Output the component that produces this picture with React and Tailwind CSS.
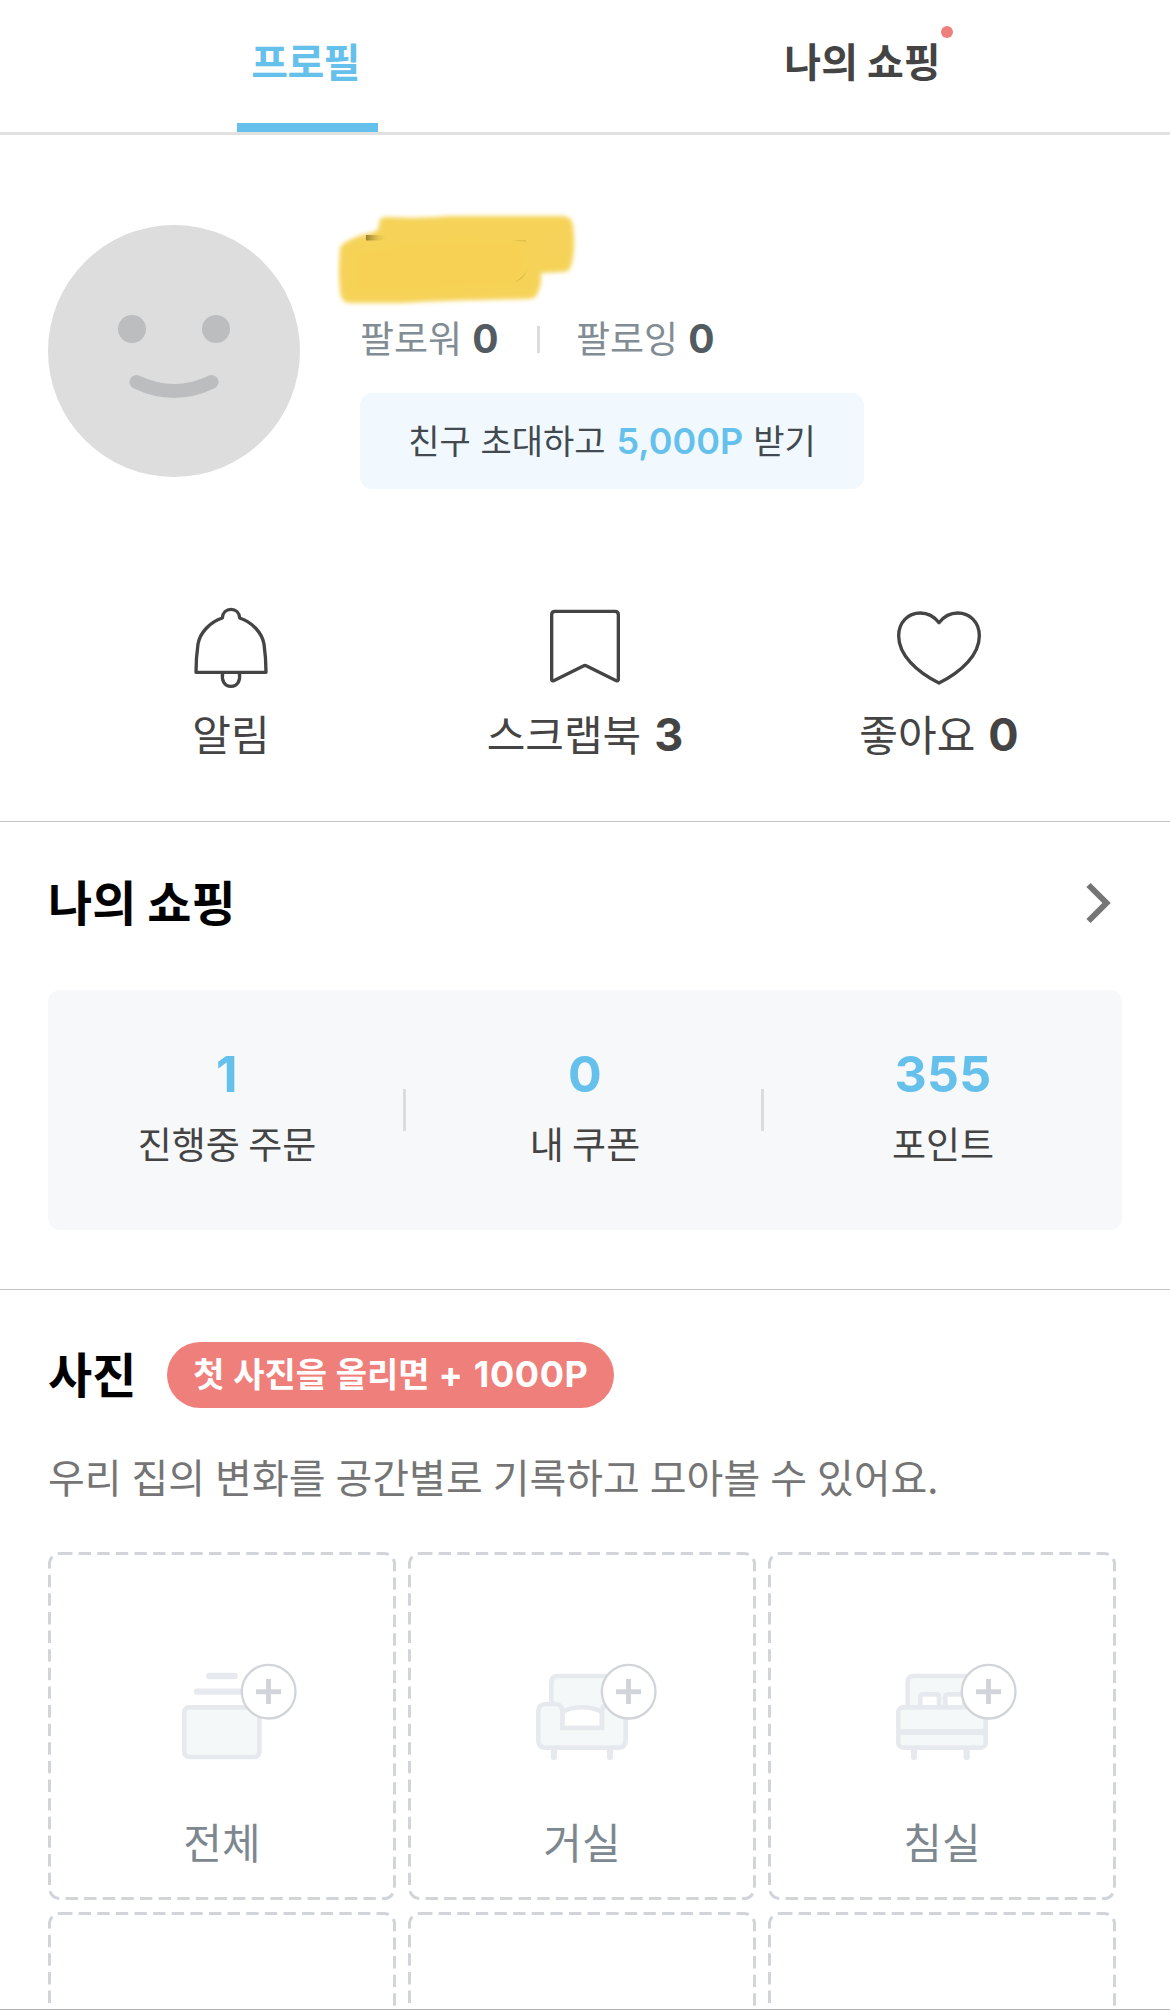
import React from "react";

const Num = ({ className, children }) => (
  <span className={`font-['Inter',sans-serif] leading-none ${className}`}>{children}</span>
);

function BellIcon() {
  return (
    <svg className="h-[90px] w-[90px]" viewBox="78 45 270 270" fill="none" stroke="#444444" strokeWidth="10" strokeLinejoin="round">
      <path d="M187 84C188 68 199 58 213 58C227 58 238 68 239 84C276 96 306 128 312 162C316 190 318 218 318 247H108C108 218 110 190 114 162C120 128 150 96 187 84Z" />
      <path d="M188 248C184 270 192 289 213 289C234 289 242 270 238 248" />
    </svg>
  );
}

function BookmarkIcon() {
  return (
    <svg className="h-[90px] w-[90px]" viewBox="1140 45 270 270" fill="none" stroke="#444444" strokeWidth="10" strokeLinejoin="round">
      <path d="M1185 64H1365Q1375 64 1375 74V268Q1375 274 1369 272L1280 228Q1275 225 1270 228L1181 272Q1175 274 1175 268V74Q1175 64 1185 64Z" />
    </svg>
  );
}

function HeartIcon() {
  return (
    <svg className="h-[90px] w-[90px]" viewBox="882 45 270 270" fill="none" stroke="#444444" strokeWidth="10" strokeLinejoin="round">
      <path d="M1017 98C1002 79 982 69 961 69C924 69 896 97 896 137C896 194 948 244 1017 279C1086 244 1138 194 1138 137C1138 97 1110 69 1073 69C1052 69 1032 79 1017 98Z" />
    </svg>
  );
}

function PlusBadge() {
  return (
    <g>
      <circle cx="356" cy="155" r="80.5" fill="#ffffff" stroke="#d1d5da" strokeWidth="7" />
      <path d="M318 155H393M355.5 117V192" stroke="#d1d5da" strokeWidth="15" fill="none" />
    </g>
  );
}

const art = { fill: "#f4f8f9", stroke: "#e6eaef", strokeWidth: 14 };

function AllArt() {
  return (
    <g {...art}>
      <path d="M178 108H254M141 155H300" strokeWidth="19" strokeLinecap="round" fill="none" />
      <rect x="103" y="202" width="225" height="149" rx="14" />
    </g>
  );
}

function SofaArt() {
  return (
    <g {...art} strokeLinejoin="round">
      <path d="M132 320V351M300 320V351" strokeWidth="19" strokeLinecap="round" fill="none" />
      <path d="M124 210V129Q124 108 145 108H290Q311 108 311 129V210V264H157Z" />
      <path d="M157 264V216C190 197 240 197 276 216V264Z" fill="#ffffff" />
      <path d="M85 215Q85 192 108 192H134Q157 192 157 215V264H276V215Q276 192 299 192H325Q347 192 347 215V300Q347 323 324 323H108Q85 323 85 300Z" strokeLinejoin="miter" />
    </g>
  );
}

function BedArt() {
  return (
    <g {...art}>
      <path d="M132 322V351M290 322V351" strokeWidth="19" strokeLinecap="round" fill="none" />
      <path d="M113 202V126Q113 108 131 108H300Q319 108 319 126V202Z" />
      <path d="M151 202V172Q151 163 160 163H198Q207 163 207 172V202Z" fill="#ffffff" />
      <path d="M226 202V172Q226 163 235 163H273Q282 163 282 172V202Z" fill="#ffffff" />
      <rect x="85" y="202" width="262" height="121" rx="15" />
      <path d="M85 276H347" strokeWidth="18" />
    </g>
  );
}

function PhotoCard({ label, Art }) {
  return (
    <div className="relative flex h-[348px] w-[348px] flex-col items-center pt-[108px]">
      <svg className="absolute inset-0 h-[348px] w-[348px]" viewBox="0 0 348 348" fill="none">
        <rect x="1.5" y="1.5" width="345" height="345" rx="10.5" stroke="#d1d5da" strokeWidth="3" strokeDasharray="12.4 6.22" />
      </svg>
      {Art && (
        <svg className="h-[103px] w-[156px]" viewBox="-18 60 468 309">
          <Art />
          <PlusBadge />
        </svg>
      )}
      {label && (
        <div className="mt-[48px] h-[60px] text-[42px] leading-[60px] text-[#7d878f]">{label}</div>
      )}
    </div>
  );
}

function Shortcut({ icon, label, count }) {
  return (
    <div className="flex w-[354px] flex-col items-center">
      {icon}
      <div className="mt-[8px] h-[60px] whitespace-nowrap text-[42px] leading-[60px] text-[#444444]">
        {label}
        {count && <Num className="ml-[13px] text-[45px] font-bold">{count}</Num>}
      </div>
    </div>
  );
}

function Stat({ value, label, divider }) {
  return (
    <div className="relative flex w-[358px] flex-col items-center pt-[54px]">
      <Num className="h-[60px] text-[50px] font-bold !leading-[60px] tracking-[0.3px] text-[#65c1eb]">{value}</Num>
      <div className="mt-[13px] h-[52px] text-[37px] leading-[52px] text-[#444444]">{label}</div>
      {divider && <span className="absolute right-0 top-[99px] h-[42px] w-[3px] bg-[#dbdcde]" />}
    </div>
  );
}

export default function App() {
  return (
    <div className="flex h-[2010px] w-[1170px] flex-col overflow-hidden border-b border-[#b3b3b3] bg-white font-['Noto_Sans_CJK_KR',sans-serif]">
      <header className="flex h-[135px] shrink-0 justify-center border-b-[3px] border-[#e1e1e1] text-[40px] font-bold leading-[60px]">
        <div className="flex w-[555px] flex-col items-center justify-between pt-[30px]">
          <span className="-ml-[4px] tracking-[-0.6px] text-[#65c1eb]">프로필</span>
          <span className="h-[9px] w-[141px] bg-[#65c1eb]" />
        </div>
        <div className="flex w-[555px] justify-center pt-[30px]">
          <span className="relative h-[60px] text-[#444444]">
            나의 쇼핑
            <span className="absolute -right-[12px] -top-[4px] h-[12px] w-[12px] rounded-full bg-[#ef7f7b]" />
          </span>
        </div>
      </header>

      <section className="flex h-[470px] shrink-0 pl-[48px] pt-[90px]">
        <svg className="h-[252px] w-[252px]" viewBox="0 0 252 252">
          <circle cx="126" cy="126" r="126" fill="#dddddd" />
          <circle cx="84" cy="104" r="14" fill="#bbbdbf" />
          <circle cx="168" cy="104" r="14" fill="#bbbdbf" />
          <path d="M88.5 157Q126 175 163.5 157" fill="none" stroke="#bbbdbf" strokeWidth="14" strokeLinecap="round" />
        </svg>
        <div className="ml-[36px] -mt-[13px] flex flex-col">
          <svg className="h-[96px] w-[244px]" viewBox="336 212 244 96">
            <defs>
              <filter id="soft" x="-5%" y="-10%" width="110%" height="120%">
                <feGaussianBlur stdDeviation="1.9" />
              </filter>
              <linearGradient id="mark" x1="0" x2="1">
                <stop offset="0" stopColor="#6b5b1e" />
                <stop offset="1" stopColor="#f6d251" stopOpacity="0" />
              </linearGradient>
            </defs>
            <path
              d="M340 250Q339 246 346 242Q358 235 371 233Q379 231 379 226V222Q380 217 387 217Q420 219 450 216L562 216Q572 216 573 226Q576 250 571 266Q569 272 563 272L541 273Q542 287 536 296Q534 299 528 299Q450 300 400 303H350Q341 303 340 291Q338 270 340 250Z"
              fill="#f6d358"
              filter="url(#soft)"
            />
            <path d="M350 252Q420 232 520 240Q532 260 524 285Q440 296 352 292Z" fill="#f6d050" opacity="0.35" filter="url(#soft)" />
            <rect x="366" y="235" width="22" height="5.5" fill="url(#mark)" opacity="0.7" />
            <path d="M512 240H526V242Z" fill="#c9a93d" opacity="0.4" />
            <path d="M527 270Q524 279 515 282Q524 276 527 270Z" fill="#b3973a" opacity="0.4" />
          </svg>
          <div className="ml-[24px] flex h-[57px] items-center pt-[1px] text-[37px] leading-[56px] text-[#828c94]">
            <span className="w-[177px] whitespace-nowrap">
              팔로워<Num className="ml-[10px] text-[39px] font-bold text-[#525b61]">0</Num>
            </span>
            <span className="mt-[4px] h-[27px] w-[3px] bg-[#dadce0]" />
            <span className="ml-[36px] whitespace-nowrap">
              팔로잉<Num className="ml-[10px] text-[39px] font-bold text-[#525b61]">0</Num>
            </span>
          </div>
          <div className="ml-[24px] mt-[28px] flex h-[96px] w-[504px] items-center justify-center whitespace-nowrap rounded-[12px] bg-[#f1f9ff] pb-[2px] text-[34px] leading-[50px] text-[#424a50]">
            <span className="[word-spacing:2px]">친구 초대하고</span>
            <Num className="ml-[11px] mt-[2px] text-[36px] font-semibold text-[#65c1eb]">5,000P</Num>
            <span className="ml-[10px]">받기</span>
          </div>
        </div>
      </section>

      <section className="flex h-[217px] shrink-0 justify-center border-b border-[#c4c4c4]">
        <Shortcut icon={<BellIcon />} label="알림" />
        <Shortcut icon={<BookmarkIcon />} label="스크랩북" count="3" />
        <Shortcut icon={<HeartIcon />} label="좋아요" count="0" />
      </section>

      <section className="h-[468px] shrink-0 border-b border-[#c4c4c4] px-[48px] pt-[43px]">
        <div className="flex h-[70px] items-center justify-between">
          <h2 className="text-[48px] font-bold leading-[70px] text-black">나의 쇼핑</h2>
          <svg className="mr-[9px] mt-[6px] h-[42px] w-[28px]" viewBox="0 0 28 42" fill="none" stroke="#757575" strokeWidth="6">
            <path d="M3.5 3L21.5 21L3.5 39" />
          </svg>
        </div>
        <div className="mt-[55px] flex h-[240px] w-[1074px] rounded-[12px] bg-[#f7f8fa]">
          <Stat value="1" label="진행중 주문" divider />
          <Stat value="0" label="내 쿠폰" divider />
          <Stat value="355" label="포인트" />
        </div>
      </section>

      <section className="shrink-0 pl-[48px] pt-[46px]">
        <div className="flex h-[78px] items-center">
          <h2 className="-mt-[7px] text-[48px] font-bold leading-[70px] text-black">사진</h2>
          <div className="ml-[31px] flex h-[66px] w-[447px] items-center justify-center whitespace-nowrap rounded-full bg-[#ef7f7b] pb-[4px] text-[34px] font-bold leading-[50px] text-white [word-spacing:1px]">
            첫 사진을 올리면
            <Num className="ml-[9px] mt-[2px] text-[36px] font-bold tracking-[0.6px]">+ 1000P</Num>
          </div>
        </div>
        <p className="mt-[32px] h-[60px] whitespace-nowrap text-[40px] leading-[60px] text-[#757575] [word-spacing:1px]">
          우리 집의 변화를 공간별로 기록하고 모아볼 수 있어요.
        </p>
        <div className="mt-[46px] grid grid-cols-[repeat(3,348px)] gap-[12px]">
          <PhotoCard label="전체" Art={AllArt} />
          <PhotoCard label="거실" Art={SofaArt} />
          <PhotoCard label="침실" Art={BedArt} />
          <PhotoCard />
          <PhotoCard />
          <PhotoCard />
        </div>
      </section>
    </div>
  );
}
